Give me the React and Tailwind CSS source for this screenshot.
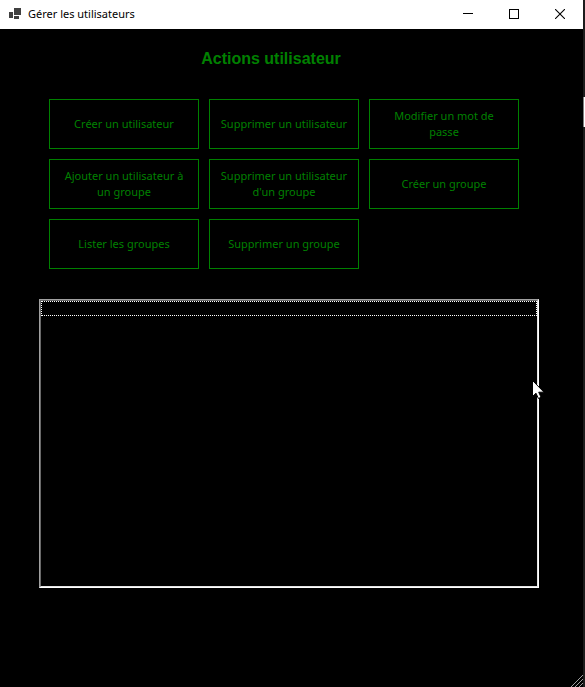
const actions = [
  'Créer un utilisateur',
  'Supprimer un utilisateur',
  'Modifier un mot de passe',
  'Ajouter un utilisateur à un groupe',
  "Supprimer un utilisateur d'un groupe",
  'Créer un groupe',
  'Lister les groupes',
  'Supprimer un groupe',
];

function AppIcon() {
  return (
    <svg width="14" height="14" viewBox="0 0 14 14" shapeRendering="crispEdges" aria-hidden="true">
      <path d="M6 1h7v7H6zM1 5h4v6H1zM6 9h5v3H6z" fill="#404040" />
    </svg>
  );
}

function TitleBar() {
  const button = 'flex w-[46px] items-center justify-center';
  return (
    <header className="flex h-[29px] items-stretch bg-white text-black">
      <div className="flex flex-1 items-center gap-[6px] pb-[2px] pl-2">
        <AppIcon />
        <span className="text-[11px] leading-4">Gérer les utilisateurs</span>
      </div>
      <div className="flex h-[27px]">
        <button type="button" aria-label="Réduire" className={button}>
          <svg width="10" height="10" viewBox="0 0 10 10" shapeRendering="crispEdges">
            <path d="M0 4h10v1H0z" fill="#000" />
          </svg>
        </button>
        <button type="button" aria-label="Agrandir" className={button}>
          <svg width="10" height="10" viewBox="0 0 10 10" shapeRendering="crispEdges">
            <rect x="0.5" y="0.5" width="9" height="9" fill="none" stroke="#000" />
          </svg>
        </button>
        <button type="button" aria-label="Fermer" className={button}>
          <svg width="10" height="10" viewBox="0 0 10 10">
            <path d="M0 0l10 10M10 0L0 10" stroke="#000" strokeWidth="1.1" />
          </svg>
        </button>
      </div>
    </header>
  );
}

function Pointer() {
  return (
    <svg
      className="pointer-events-none absolute top-[80px] -right-[8px]"
      width="14"
      height="20"
      viewBox="0 0 14 20"
      aria-hidden="true"
    >
      <path
        d="M0.5 0.5v16l3.5-3.3 2.4 5.3 2.7-1.2-2.4-5.1h5.3z"
        fill="#fff"
        stroke="#000"
        strokeWidth="1"
      />
    </svg>
  );
}

function ResizeGrip() {
  return (
    <svg width="12" height="12" viewBox="0 0 12 12" aria-hidden="true">
      <path d="M0 12L12 0M4 12l8-8M8 12l4-4" stroke="#a0a0a0" strokeWidth="1" />
    </svg>
  );
}

export default function App() {
  return (
    <div className="flex min-h-screen bg-black font-['Noto_Sans','Segoe_UI',sans-serif]">
      <div className="flex flex-1 flex-col">
        <TitleBar />
        <main className="flex-1 pt-5 pr-[44px] pl-[39px]">
          <h1 className="pr-9 text-center font-['Liberation_Sans',Arial,sans-serif] text-[16px] leading-5 font-bold text-[#008000]">
            Actions utilisateur
          </h1>
          <div className="mt-[30px] grid auto-rows-[50px] grid-cols-3 gap-[10px] pr-5 pl-[10px]">
            {actions.map((label) => (
              <button
                key={label}
                type="button"
                className="border border-[#008000] px-2 text-[11px] leading-4 text-[#008000]"
              >
                {label}
              </button>
            ))}
          </div>
          <div className="relative mt-[30px] h-[289px] border border-t-[#a0a0a0] border-r-white border-b-white border-l-[#a0a0a0]">
            <ul
              role="listbox"
              aria-label="Résultats"
              className="h-full border border-t-[#696969] border-r-[#e3e3e3] border-b-[#e3e3e3] border-l-[#696969]"
            >
              <li role="option" aria-selected="false" className="h-[15px] border border-dotted border-white" />
            </ul>
            <Pointer />
          </div>
        </main>
        <footer className="flex justify-end">
          <ResizeGrip />
        </footer>
      </div>
      <div className="w-[2px] bg-[#1c1c1c] pt-[97px]">
        <div className="h-[30px] border-l border-[#808080] bg-white" />
      </div>
    </div>
  );
}
